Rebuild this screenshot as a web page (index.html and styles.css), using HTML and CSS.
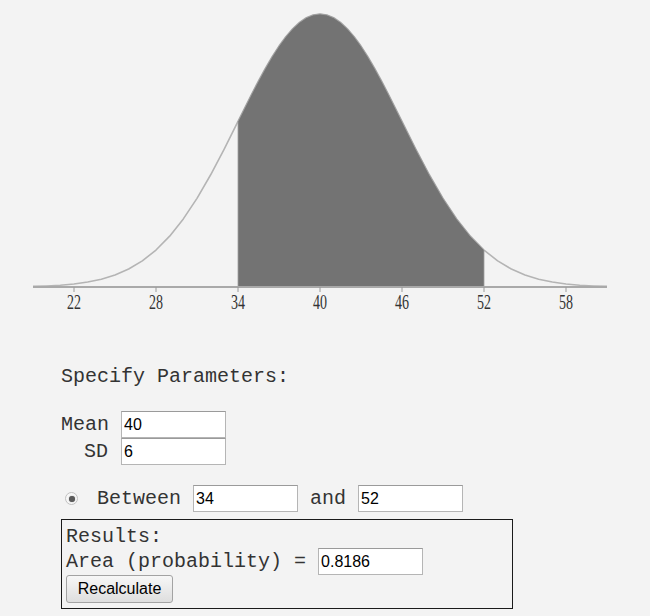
FILE: index.html
```html
<!DOCTYPE html>
<html>
<head>
<meta charset="utf-8">
<link rel="stylesheet" href="styles.css">
</head>
<body>
<svg class="chart" width="650" height="330" viewBox="0 0 650 330">
  <polyline class="curve" points="33,286.4 46.67,285.94 60.33,285.18 74,283.97 87.67,282.07 101.33,279.2 115,275 128.67,269.06 142.33,260.89 156,250.05 169.67,236.15 183.33,218.93 197,198.37 210.67,174.77 224.33,148.77 238,121.42 251.67,94.09 258.5,80.93 265.33,68.4 272.17,56.71 279,46.08 285.83,36.7 292.67,28.75 299.5,22.4 306.33,17.77 313.17,14.95 320,14 326.83,14.95 333.67,17.77 340.5,22.4 347.33,28.75 354.17,36.7 361,46.08 367.83,56.71 374.67,68.4 381.5,80.93 388.33,94.09 402,121.42 415.67,148.77 429.33,174.77 443,198.37 456.67,218.93 470.33,236.15 484,250.05 497.67,260.89 511.33,269.06 525,275 538.67,279.2 552.33,282.07 566,283.97 579.67,285.18 593.33,285.94 607,286.4"/>
  <polygon class="shade" points="238,287 238,121.42 251.67,94.09 258.5,80.93 265.33,68.4 272.17,56.71 279,46.08 285.83,36.7 292.67,28.75 299.5,22.4 306.33,17.77 313.17,14.95 320,14 326.83,14.95 333.67,17.77 340.5,22.4 347.33,28.75 354.17,36.7 361,46.08 367.83,56.71 374.67,68.4 381.5,80.93 388.33,94.09 402,121.42 415.67,148.77 429.33,174.77 443,198.37 456.67,218.93 470.33,236.15 484,250.05 484,287"/>
  <line class="axis" x1="33" y1="287" x2="607" y2="287"/>
  <g class="ticks">
    <line x1="74" y1="287" x2="74" y2="292"/>
    <line x1="156" y1="287" x2="156" y2="292"/>
    <line x1="238" y1="287" x2="238" y2="292"/>
    <line x1="320" y1="287" x2="320" y2="292"/>
    <line x1="402" y1="287" x2="402" y2="292"/>
    <line x1="484" y1="287" x2="484" y2="292"/>
    <line x1="566" y1="287" x2="566" y2="292"/>
  </g>
  <g class="labels">
    <text x="67" y="309" textLength="14" lengthAdjust="spacingAndGlyphs">22</text>
    <text x="149" y="309" textLength="14" lengthAdjust="spacingAndGlyphs">28</text>
    <text x="231" y="309" textLength="14" lengthAdjust="spacingAndGlyphs">34</text>
    <text x="313" y="309" textLength="14" lengthAdjust="spacingAndGlyphs">40</text>
    <text x="395" y="309" textLength="14" lengthAdjust="spacingAndGlyphs">46</text>
    <text x="477" y="309" textLength="14" lengthAdjust="spacingAndGlyphs">52</text>
    <text x="559" y="309" textLength="14" lengthAdjust="spacingAndGlyphs">58</text>
  </g>
</svg>
<div class="panel">
  <p class="title">Specify Parameters:</p>
  <div class="params">
    <span class="plabel">Mean</span><input class="field" type="text" value="40">
    <span class="plabel">SD</span><input class="field" type="text" value="6">
  </div>
  <div class="between">
    <span class="radio"><span class="dot"></span></span>
    <span class="word first">Between</span>
    <input class="field" type="text" value="34">
    <span class="word">and</span>
    <input class="field" type="text" value="52">
  </div>
  <div class="results">
    <div class="rtitle">Results:</div>
    <div class="area"><span class="word">Area (probability) =</span><input class="field" type="text" value="0.8186"></div>
    <button class="btn" type="button">Recalculate</button>
  </div>
</div>
</body>
</html>
```

FILE: styles.css
```css
html, body {
  margin: 0;
  padding: 0;
  background: #f3f3f3;
}
body {
  width: 650px;
  height: 616px;
  overflow: hidden;
  font-family: "Liberation Mono", "Courier New", monospace;
  font-size: 20px;
  color: #333;
}
.chart {
  display: block;
}
.curve {
  fill: none;
  stroke: #b4b4b4;
  stroke-width: 1.6;
  stroke-linejoin: round;
}
.shade {
  fill: #737373;
  stroke: #a0a0a0;
  stroke-width: 0.8;
}
.axis {
  stroke: #a9a9a9;
  stroke-width: 2;
}
.ticks line {
  stroke: #9a9a9a;
  stroke-width: 1;
}
.labels text {
  font-family: "Liberation Serif", "Times New Roman", serif;
  font-size: 21px;
  fill: #333;
}
.panel {
  padding-left: 61px;
}
.title {
  margin: 35px 0 0 0;
  line-height: 23px;
}
.params {
  margin-top: 23px;
  display: grid;
  grid-template-columns: 47px 105px;
  column-gap: 13px;
  align-items: center;
}
.plabel {
  text-align: right;
  line-height: 23px;
}
.field {
  box-sizing: border-box;
  width: 105px;
  height: 27px;
  margin: 0;
  padding: 0 2px;
  border: 1px solid #b5b5b5;
  border-top-color: #9a9a9a;
  background: #fff;
  font-family: "Liberation Sans", Arial, sans-serif;
  font-size: 16px;
  color: #000;
  outline: none;
}
.between {
  margin-top: 20px;
  display: flex;
  align-items: center;
  gap: 12px;
  line-height: 23px;
}
.radio {
  box-sizing: border-box;
  width: 13px;
  height: 13px;
  margin-left: 4px;
  margin-right: 7px;
  border: 1px solid #c2c2c2;
  border-radius: 50%;
  background: #f7f7f7;
  display: flex;
  align-items: center;
  justify-content: center;
}
.dot {
  width: 6px;
  height: 6px;
  border-radius: 50%;
  background: #5a5a5a;
  box-shadow: 0 0 1px #777;
}
.results {
  box-sizing: border-box;
  width: 452px;
  margin-top: 7px;
  border: 1px solid #1a1a1a;
  padding: 5px 4px 5px 4px;
}
.rtitle {
  line-height: 23px;
}
.area {
  display: flex;
  align-items: center;
  gap: 12px;
  line-height: 23px;
}
.btn {
  box-sizing: border-box;
  display: block;
  width: 107px;
  height: 28px;
  margin: 0;
  padding: 0;
  border: 1px solid #a3a3a3;
  border-radius: 3px;
  background: linear-gradient(#f7f7f7, #dedede);
  font-family: "Liberation Sans", Arial, sans-serif;
  font-size: 16px;
  color: #000;
}
```
